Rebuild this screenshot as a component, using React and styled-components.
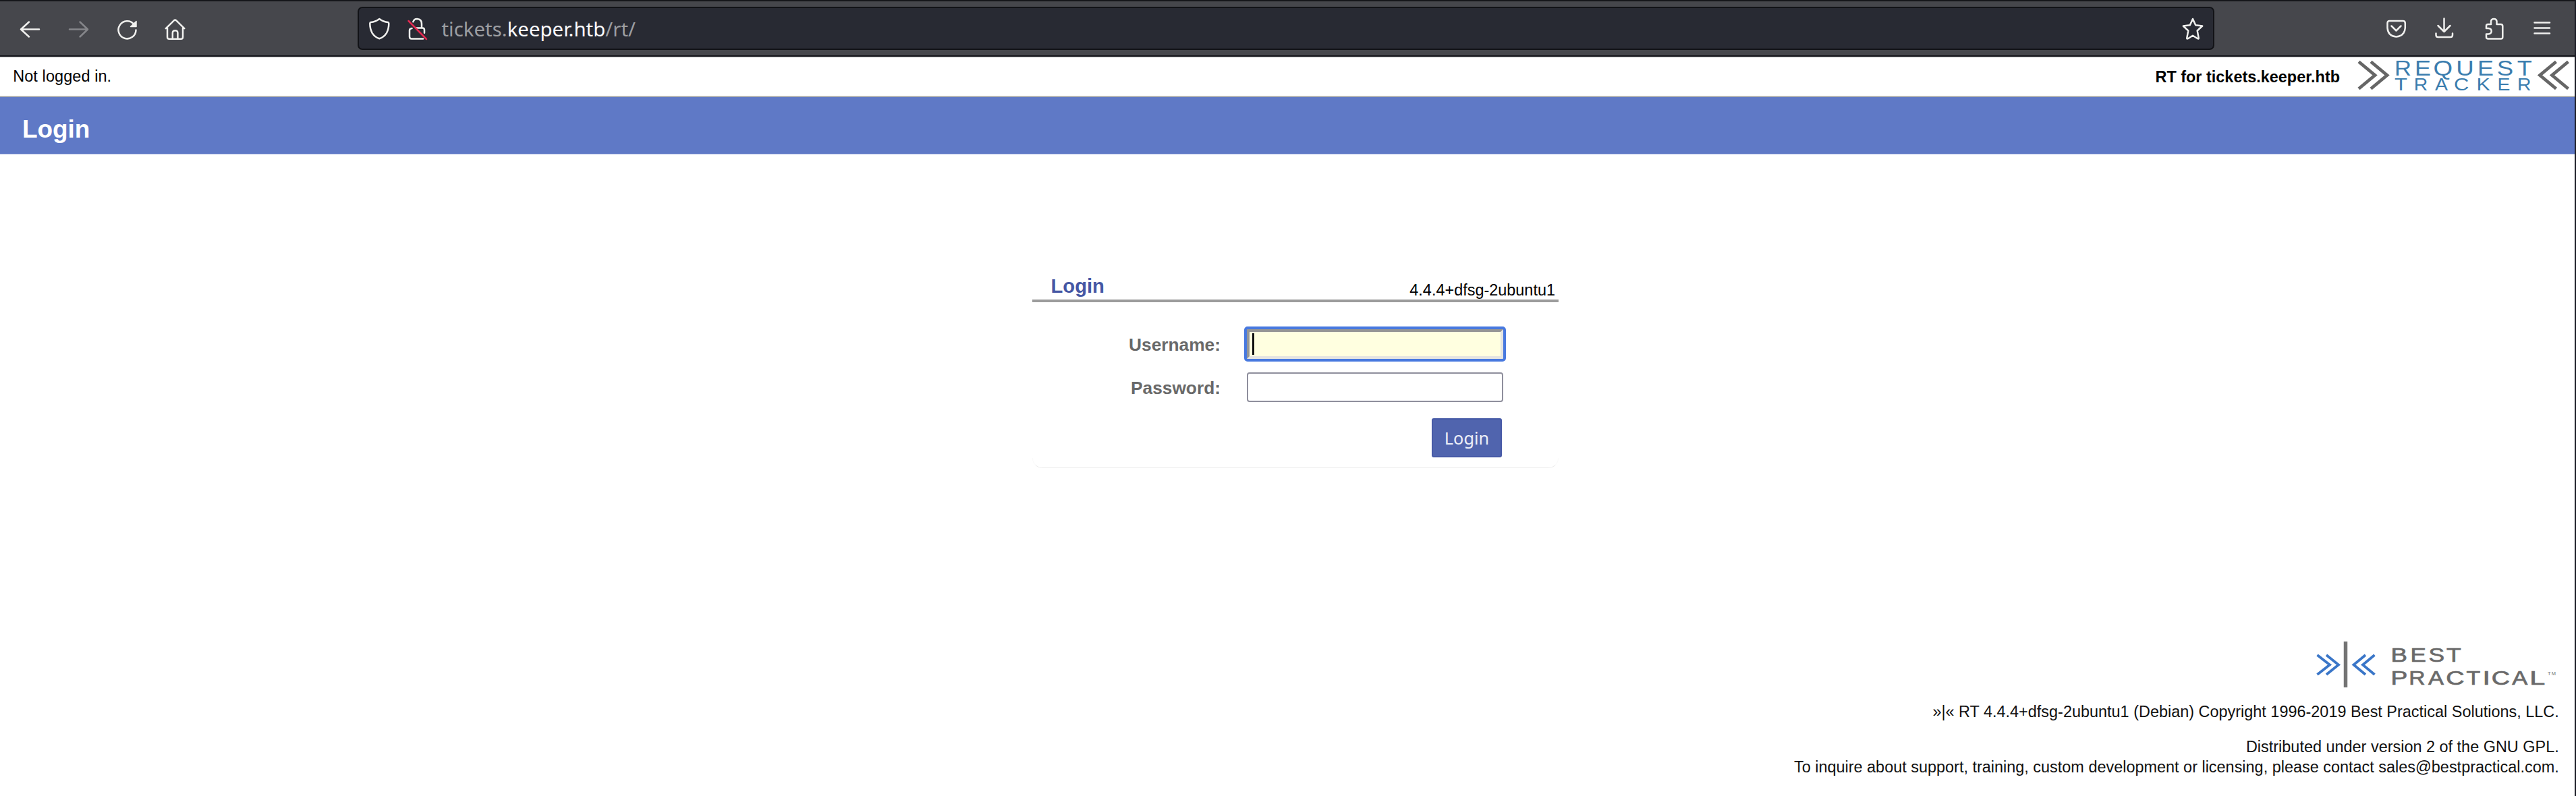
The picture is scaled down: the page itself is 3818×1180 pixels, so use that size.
import React from "react";
import styled, { createGlobalStyle } from "styled-components";

const GlobalStyle = createGlobalStyle`
  *, *::before, *::after { box-sizing: border-box; }
  body { margin: 0; background: #fff; }
`;

const sans = `"Liberation Sans", Arial, sans-serif`;
const uiSans = `"Noto Sans", sans-serif`;

const Window = styled.div`
  display: flex;
  flex-direction: column;
  height: 1180px;
  overflow: hidden;
  border-right: 2px solid #1c1d26;
  background: #fff;
  color: #000;
  font: 23.45px/30px ${sans};
`;

const Toolbar = styled.header`
  display: flex;
  align-items: center;
  flex: none;
  height: 84px;
  padding: 0 28px 0 24px;
  background: #46474c;
  border-top: 2px solid #15161a;
  border-bottom: 2px solid #15161b;
`;

const ToolbarEdge = styled.div`
  flex: none;
  height: 1px;
  background: #a2a2a6;
`;

const ButtonGroup = styled.nav`
  display: flex;
  gap: 32px;
`;

const IconSvg = styled.svg`
  display: block;
  flex: none;
  width: 40px;
  height: 40px;
  fill: none;
  stroke: ${(p) => (p.$dim ? "#85868a" : "#f0f0ee")};
  stroke-width: 2.5;
  stroke-linecap: round;
  stroke-linejoin: round;
`;

const AddressBar = styled.div`
  display: flex;
  align-items: center;
  flex: 1;
  height: 64px;
  margin: 0 250px;
  padding: 0 10px;
  background: #282a33;
  border: 2px solid #121317;
  border-radius: 7px;
`;

const SiteIcons = styled.div`
  display: flex;
  gap: 16px;
`;

const Url = styled.div`
  flex: 1;
  padding: 1px 0 0 16.5px;
  font: 29.4px/60px ${uiSans};
  color: #9c9da1;
  white-space: nowrap;
`;

const Host = styled.span`
  color: #fbfbfe;
`;

const AccountBar = styled.div`
  display: flex;
  justify-content: space-between;
  flex: none;
  height: 59px;
  padding: 0 2px 0 19.2px;
  border-bottom: 2px solid #b4b5b4;
`;

const AccountStatus = styled.span`
  line-height: 56px;
  letter-spacing: 0.1px;
`;

const Branding = styled.div`
  display: flex;
  gap: 22px;
`;

const SiteName = styled.strong`
  line-height: 58px;
`;

const RtLogo = styled.svg`
  display: block;
  width: 324px;
  height: 57px;
  font-family: ${sans};
`;

const TitleBar = styled.h1`
  flex: none;
  height: 84px;
  margin: 0;
  padding: 11px 0 0 33px;
  background: #5f79c6;
  color: #fff;
  font: bold 36.9px/74px ${sans};
  box-shadow: 0 1px 0 #bcc8ea;
`;

const LoginBox = styled.section`
  position: relative;
  flex: none;
  width: 780px;
  height: 290px;
  margin: 176px 0 0 1530px;

  &::after {
    content: "";
    position: absolute;
    inset: auto 0 0;
    height: 15px;
    border: solid #ebebeb;
    border-width: 0 1px 1.5px;
    border-left-color: #fafafa;
    border-right-color: #fafafa;
    border-radius: 0 0 15px 15px;
  }
`;

const BoxHeader = styled.div`
  display: flex;
  justify-content: space-between;
  align-items: flex-end;
  height: 44px;
  padding: 0 5px 0 27.5px;
  border-bottom: 4px solid #9c9c9c;
`;

const BoxTitle = styled.h2`
  margin: 0;
  color: #4557a4;
  font: bold 29.2px/40px ${sans};
`;

const Version = styled.span`
  line-height: 28px;
`;

const Form = styled.form`
  display: grid;
  grid-template-columns: 279px 380px;
  grid-auto-rows: 44px;
  gap: 20px 39px;
  padding-top: 40px;
`;

const Label = styled.label`
  color: #696969;
  font: bold 26.3px/46px ${sans};
  text-align: right;
`;

const Field = styled.div`
  position: relative;
`;

const TextInput = styled.input`
  display: block;
  width: 100%;
  height: 100%;
  padding: 0 6px;
  font: 26px ${uiSans};
  background: ${(p) => (p.$active ? "#ffffe0" : "#fff")};
  border: ${(p) => (p.$active ? "4px solid" : "2px solid #8f8f9d")};
  ${(p) => p.$active && "border-color: #959595 #e4e4e1 #e4e4e1 #959595;"}
  border-radius: ${(p) => (p.$active ? "1px" : "4px")};
  outline: ${(p) => (p.$active ? "4px solid #4879df" : "none")};
`;

const Caret = styled.span`
  position: absolute;
  left: 7.5px;
  top: 6px;
  width: 3px;
  height: 32px;
  background: #111;
`;

const SubmitButton = styled.button`
  grid-column: 2;
  justify-self: end;
  width: 104px;
  height: 58px;
  margin: 4px 2px 0 0;
  padding: 0;
  background: #5064ae;
  border: 2px solid #4659a6;
  border-radius: 3px;
  color: #eceff8;
  font: 25.3px/50px ${uiSans};
`;

const Footer = styled.footer`
  display: flex;
  flex-direction: column;
  align-items: flex-end;
  margin-top: auto;
  padding: 0 23.3px 28.500px 0;
  color: #111;
`;

const VendorLogo = styled.svg`
  display: block;
  width: 363px;
  height: 72px;
  margin-bottom: 19px;
  font-family: ${sans};
`;

const FooterLine = styled.p`
  margin: 0 0 ${(p) => (p.$spaced ? "21.5px" : "0")};
  white-space: nowrap;
`;

function Icon({ dim, children }) {
  return (
    <IconSvg viewBox="0 0 40 40" $dim={dim} aria-hidden="true">
      {children}
    </IconSvg>
  );
}

/* Wide capitals: each letter is stretched to its own advance. */
function WideText({ letters, y, size, fill, stroke = 0 }) {
  return letters.map(([char, x, width], i) => (
    <text
      key={i}
      x={x}
      y={y}
      fontSize={size}
      fill={fill}
      stroke={fill}
      strokeWidth={stroke}
      textLength={width}
      lengthAdjust="spacingAndGlyphs"
    >
      {char}
    </text>
  ));
}

const request = [
  ["R", 57.2, 25], ["E", 87.2, 24], ["Q", 114.6, 28.6], ["U", 148.5, 26.5],
  ["E", 180.2, 24], ["S", 209, 24.4], ["T", 238.9, 22],
];
const tracker = [
  ["T", 57.2, 19], ["R", 86, 20.5], ["A", 117.2, 19], ["C", 145.3, 22.3],
  ["K", 178.6, 20.3], ["E", 209.7, 18.9], ["R", 239.3, 20.5],
];
const best = [
  ["B", 113.5, 24.5], ["E", 142.5, 23.4], ["S", 169.5, 23.6], ["T", 196, 21.8],
];
const practical = [
  ["P", 113.5, 24.8], ["R", 140.2, 24.3], ["A", 169, 23], ["C", 195.2, 27.4],
  ["T", 225.5, 20.8], ["I", 249.4, 11.5], ["C", 262.8, 27.4], ["A", 293.3, 23], ["L", 319.2, 23],
];

export default function App() {
  return (
    <>
      <GlobalStyle />
      <Window>
        <Toolbar>
          <ButtonGroup>
            <Icon>
              <path d="M34 21.5H7M19 10.5l-12 11 12 11" />
            </Icon>
            <Icon dim>
              <path d="M7 21.5h27M22.5 10.5l11.5 11-11.5 11" />
            </Icon>
            <Icon>
              <path d="M30.5 14A13 13 0 1 0 33.5 22.5" />
              <path d="M34 9.5v8h-8.5z" fill="#f0f0ee" strokeWidth="1.5" />
            </Icon>
            <Icon>
              <path d="M5.8 20.2 18 8.2q1.5-1.2 3 0l12.2 12M8 19v14q0 2.8 2.8 2.8h17.4q2.8 0 2.8-2.8V19M15.8 35.5V27q0-3.8 3.8-3.8t3.8 3.8v8.5" />
            </Icon>
          </ButtonGroup>
          <AddressBar>
            <SiteIcons>
              <Icon>
                <path d="M20.3 6q6 4.5 12.7 5 1.3.3 1.3 1.8 0 8-3.3 14-4 6.4-10.7 8.4-6.7-2-10.7-8.4-3.300-6-3.300-14 0-1.500 1.300-1.800 6.700-.5 12.700-5z" />
              </Icon>
              <Icon>
                <path d="M14.300 10.300q1.400-4.300 5.900-4.300 6.800.2 6.800 7.500v6H18.500M12.500 20Q9 20.300 9 23v9.500q0 3 3 3h17M27 19.500h1.300q2.700 0 2.700 2.800v4.500" />
                <path d="M7.500 9l26.500 27" stroke="#e22850" strokeWidth="2.500" />
              </Icon>
            </SiteIcons>
            <Url>
              tickets.<Host>keeper.htb</Host>/rt/
            </Url>
            <Icon>
              <path d="M20 6l4.200 9.300 10 1.200-7.500 7 2 10.800q.2 1.700-1.500.9L20 30.800l-7.200 4.400q-1.700.8-1.500-.9l2-10.800-7.500-7 10-1.200z" />
            </Icon>
          </AddressBar>
          <ButtonGroup>
            <Icon>
              <path d="M9.500 9h20q3.300 0 3.300 3.300v7q-.8 12-13.300 13.200Q7.300 31.300 6.500 19.300v-7Q6.500 9 9.500 9zM12.500 16.500l7 7 7-7" />
            </Icon>
            <Icon>
              <path d="M18.500 5.500V24M9.500 16l9 9 9-9M6.500 27.500V30q0 3 3 3h18.500q3 0 3-3v-2.500" />
            </Icon>
            <Icon>
              <path d="M9 20v-3.500q0-2.500 2.500-2.500H16V9.500Q16.500 6 20.300 6t4.200 3.500V14h6q2.800 0 2.800 2.800V33q0 2.500-2.500 2.500h-19Q9 35.500 9 33v-4.500h3q4.700-.5 4.700-4.300T12 20z" />
            </Icon>
            <Icon>
              <path d="M8.500 11.500h22.500M8.500 19.500h22.500M8.500 27.500h22.500" />
            </Icon>
          </ButtonGroup>
        </Toolbar>
        <ToolbarEdge />

        <AccountBar>
          <AccountStatus>Not logged in.</AccountStatus>
          <Branding>
            <SiteName>RT for tickets.keeper.htb</SiteName>
            <RtLogo viewBox="0 0 324 57" role="img" aria-label="Request Tracker">
              <g transform="translate(-1 0)" fill="none" stroke="#666" strokeWidth="4.800">
                <path d="M7 6.500l24 20L7 46.500M25 6.500l24 20-24 20" />
                <path d="M299.500 6.500l-24 20 24 20M317.500 6.500l-24 20 24 20" />
              </g>
              <g transform="translate(1.800 0)">
                <WideText letters={request} y={26.600} size={31} fill="#3b7dae" />
                <WideText letters={tracker} y={49.300} size={26.500} fill="#3b7dae" />
              </g>
            </RtLogo>
          </Branding>
        </AccountBar>
        <TitleBar>Login</TitleBar>

        <LoginBox>
          <BoxHeader>
            <BoxTitle>Login</BoxTitle>
            <Version>4.4.4+dfsg-2ubuntu1</Version>
          </BoxHeader>
          <Form>
            <Label htmlFor="user">Username:</Label>
            <Field>
              <TextInput id="user" $active />
              <Caret />
            </Field>
            <Label htmlFor="pass">Password:</Label>
            <Field>
              <TextInput id="pass" type="password" />
            </Field>
            <SubmitButton type="button">Login</SubmitButton>
          </Form>
        </LoginBox>

        <Footer>
          <VendorLogo viewBox="0 0 363 72" role="img" aria-label="Best Practical">
            <g fill="none" stroke="#3a76c8" strokeWidth="3.800">
              <path d="M4.500 22l18.500 14.500L4.500 51M18 22l18 14.500L18 51" />
              <path d="M76 22L58.500 36.500 76 51M89.500 22L72 36.500 89.500 51" />
            </g>
            <path d="M46.500 2v68" stroke="#747474" strokeWidth="5.500" />
            <WideText letters={best} y={32.400} size={29.500} fill="#6a6a6a" stroke={0.700} />
            <WideText letters={practical} y={66} size={29.500} fill="#6a6a6a" stroke={0.700} />
            <text x="346" y="51.500" fontSize="7.500" fill="#707070" textLength="12">TM</text>
          </VendorLogo>
          <FooterLine $spaced>
            »|« RT 4.4.4+dfsg-2ubuntu1 (Debian) Copyright 1996-2019 Best Practical Solutions, LLC.
          </FooterLine>
          <FooterLine>Distributed under version 2 of the GNU GPL.</FooterLine>
          <FooterLine>
            To inquire about support, training, custom development or licensing, please contact sales@bestpractical.com.
          </FooterLine>
        </Footer>
      </Window>
    </>
  );
}
